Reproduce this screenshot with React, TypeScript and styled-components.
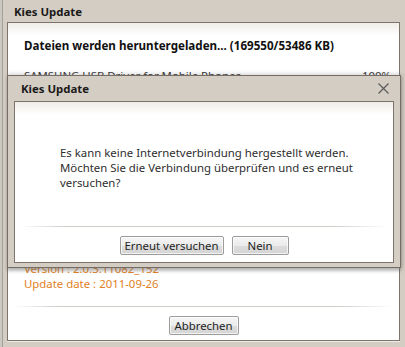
import React from "react";
import styled, { createGlobalStyle } from "styled-components";

const GlobalStyle = createGlobalStyle`
  html, body { margin: 0; padding: 0; }
  body {
    background: #d4cdc3;
    font-family: "Noto Sans", "Open Sans", sans-serif;
    font-size: 11.4px;
    color: #222;
  }
`;

const Window = styled.div`
  position: relative;
  width: 405px;
  height: 347px;
  box-sizing: border-box;
  display: flex;
  flex-direction: column;
  padding: 0 5px 6px 7px;
  background: #d4cdc3;
  box-shadow: inset 2px 0 0 #cbc7c1, inset 3px 0 0 #a59f97;
  overflow: hidden;
`;

const TitleBar = styled.div`
  height: 22px;
  display: flex;
  align-items: center;
  justify-content: space-between;
  padding: 0 0 0 7px;
  font-weight: bold;
  font-size: 11.4px;
  color: #1a1a1a;
  flex-shrink: 0;
`;

const Panel = styled.div`
  flex: 1;
  display: flex;
  flex-direction: column;
  background: #fff;
  border: 1px solid #7d756c;
  box-shadow: 0 1px 0 #efebe6;
`;

const DottedTop = styled.div`
  height: 13px;
  flex-shrink: 0;
  background: linear-gradient(#f1eee9, #fbfaf8 70%, #fff);
`;

const Heading = styled.div`
  padding: 1px 16px 0;
  font-weight: bold;
  font-size: 11.6px;
  line-height: 17px;
  color: #111;
  white-space: nowrap;
`;

const FileRow = styled.div`
  display: flex;
  justify-content: space-between;
  padding: 14px 8px 0 16px;
  line-height: 15px;
  color: #333;
  white-space: nowrap;
`;

const Spacer = styled.div`
  flex: 1;
`;

const InfoLine = styled.div`
  padding-left: 16px;
  line-height: 15px;
  color: #df8125;
`;

const Separator = styled.div<{ $inset: number; $top?: number }>`
  height: 1px;
  margin: ${(p) => p.$top ?? 0}px ${(p) => p.$inset}px 0;
  background: linear-gradient(
    to right,
    rgba(200, 196, 190, 0),
    #d0ccc6 12%,
    #d0ccc6 85%,
    rgba(200, 196, 190, 0)
  );
`;

const Footer = styled.div<{ $top: number; $bottom: number }>`
  display: flex;
  justify-content: center;
  gap: 8px;
  padding: ${(p) => p.$top}px 0 ${(p) => p.$bottom}px;
`;

const Button = styled.button<{ $width: number }>`
  width: ${(p) => p.$width}px;
  height: 19px;
  padding: 0;
  font-family: inherit;
  font-size: 11.4px;
  line-height: 16px;
  color: #1e1e1e;
  background: linear-gradient(#f6f6f6, #ebebeb 50%, #dddddd 51%, #d4d4d4);
  border: 1px solid #9c9c9c;
  border-radius: 2px;
  box-shadow: inset 0 0 0 1px rgba(255, 255, 255, 0.7);
`;

const Dialog = styled.div`
  position: absolute;
  left: 7px;
  top: 75px;
  width: 394px;
  height: 193px;
  box-sizing: border-box;
  display: flex;
  flex-direction: column;
  padding: 0 6px 4px 6px;
  background: #d4cdc3;
  border: 1px solid #756d65;
  box-shadow: 0 3px 3px rgba(90, 90, 90, 0.4), 2px 0 3px rgba(80, 80, 80, 0.2),
    0 -3px 3px rgba(120, 120, 120, 0.12);
`;

const DialogTitle = styled(TitleBar)`
  height: 25px;
  padding-left: 7px;
  padding-right: 5px;
`;

const CloseButton = styled.div`
  width: 12px;
  height: 12px;
  display: flex;
  align-items: center;
  justify-content: center;
`;

const DialogBody = styled.div`
  flex: 1;
  display: flex;
  flex-direction: column;
  background: #fff;
  border: 1px solid #7d756c;
`;

const Message = styled.div`
  padding: 30px 20px 0 45px;
  line-height: 15px;
  color: #2e2e2e;
  white-space: nowrap;
  flex: 1;
`;

export default function App() {
  return (
    <>
      <GlobalStyle />
      <Window>
        <TitleBar>Kies Update</TitleBar>
        <Panel>
          <DottedTop />
          <Heading>Dateien werden heruntergeladen... (169550/53486 KB)</Heading>
          <FileRow>
            <span>SAMSUNG USB Driver for Mobile Phones ...........</span>
            <span>100%</span>
          </FileRow>
          <Spacer />
          <InfoLine>Version : 2.0.3.11082_152</InfoLine>
          <InfoLine>Update date : 2011-09-26</InfoLine>
          <Separator $inset={6} $top={15} />
          <Footer $top={9} $bottom={5}>
            <Button $width={70}>Abbrechen</Button>
          </Footer>
        </Panel>

        <Dialog>
          <DialogTitle>
            <span>Kies Update</span>
            <CloseButton>
              <svg width="11" height="11" viewBox="0 0 11 11">
                <path d="M0.5 0.5 L10.5 10.5 M10.5 0.5 L0.5 10.5" stroke="#5a5a5a" strokeWidth="1.2" />
              </svg>
            </CloseButton>
          </DialogTitle>
          <DialogBody>
            <DottedTop />
            <Message>
              Es kann keine Internetverbindung hergestellt werden.
              <br />
              Möchten Sie die Verbindung überprüfen und es erneut
              <br />
              versuchen?
            </Message>
            <Separator $inset={6} />
            <Footer $top={9} $bottom={7}>
              <Button $width={104}>Erneut versuchen</Button>
              <Button $width={57}>Nein</Button>
            </Footer>
          </DialogBody>
        </Dialog>
      </Window>
    </>
  );
}
